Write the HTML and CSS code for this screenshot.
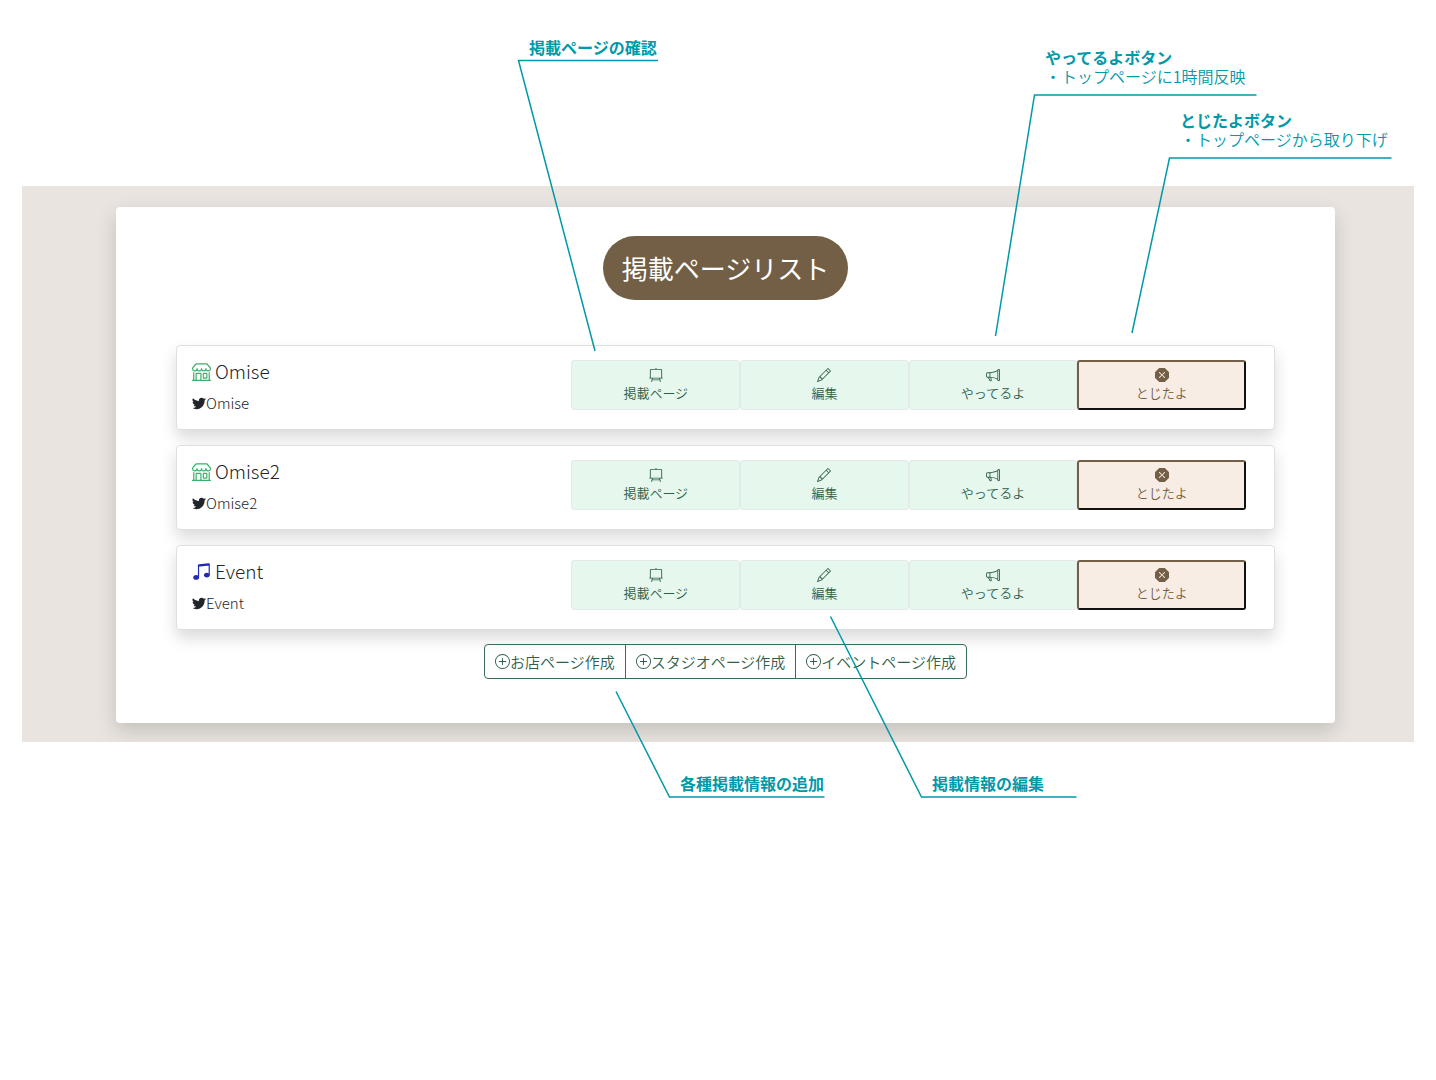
FILE: index.html
```html
<!DOCTYPE html>
<html lang="ja">
<head>
<meta charset="utf-8">
<meta name="viewport" content="width=device-width, initial-scale=1">
<title>掲載ページリスト</title>
<link rel="stylesheet" href="styles.css">
</head>
<body>
<svg class="sprite" aria-hidden="true">
  <symbol id="shop" viewBox="0 0 16 16"><path d="M2.97 1.35A1 1 0 0 1 3.73 1h8.54a1 1 0 0 1 .76.35l2.609 3.044A1.5 1.5 0 0 1 16 5.37v.255a2.375 2.375 0 0 1-4.25 1.458A2.37 2.37 0 0 1 9.875 8 2.37 2.37 0 0 1 8 7.083 2.37 2.37 0 0 1 6.125 8a2.37 2.37 0 0 1-1.875-.917A2.375 2.375 0 0 1 0 5.625V5.37a1.5 1.5 0 0 1 .361-.976zm1.78 4.275a1.375 1.375 0 0 0 2.75 0 .5.5 0 0 1 1 0 1.375 1.375 0 0 0 2.75 0 .5.5 0 0 1 1 0 1.375 1.375 0 1 0 2.75 0V5.37a.5.5 0 0 0-.12-.325L12.27 2H3.73L1.12 5.045A.5.5 0 0 0 1 5.37v.255a1.375 1.375 0 0 0 2.75 0 .5.5 0 0 1 1 0M1.5 8.5A.5.5 0 0 1 2 9v6h1v-5a1 1 0 0 1 1-1h3a1 1 0 0 1 1 1v5h6V9a.5.5 0 0 1 1 0v6h.5a.5.5 0 0 1 0 1H.5a.5.5 0 0 1 0-1H1V9a.5.5 0 0 1 .5-.5M4 15h3v-5H4zm5-5a1 1 0 0 1 1-1h2a1 1 0 0 1 1 1v3a1 1 0 0 1-1 1h-2a1 1 0 0 1-1-1zm3 0h-2v3h2z"/></symbol>
  <symbol id="music" viewBox="0 0 16 16"><path d="M6 13c0 1.105-1.12 2-2.5 2S1 14.105 1 13s1.12-2 2.5-2 2.5.896 2.5 2m9-2c0 1.105-1.12 2-2.5 2s-2.5-.895-2.5-2 1.12-2 2.5-2 2.5.895 2.5 2"/><path d="M14 11V2h1v9zM6 3v10H5V3z"/><path d="M5 2.905a1 1 0 0 1 .9-.995l8-.8a1 1 0 0 1 1.1.995V3L5 4z"/></symbol>
  <symbol id="twitter" viewBox="0 0 16 16"><path d="M5.026 15c6.038 0 9.341-5.003 9.341-9.334q.002-.211-.006-.422A6.7 6.7 0 0 0 16 3.542a6.7 6.7 0 0 1-1.889.518 3.3 3.3 0 0 0 1.447-1.817 6.5 6.5 0 0 1-2.087.793A3.286 3.286 0 0 0 7.875 6.03a9.32 9.32 0 0 1-6.767-3.429 3.29 3.29 0 0 0 1.018 4.382A3.3 3.3 0 0 1 .64 6.575v.045a3.29 3.29 0 0 0 2.632 3.218 3.2 3.2 0 0 1-.865.115 3 3 0 0 1-.614-.057 3.28 3.28 0 0 0 3.067 2.277A6.6 6.6 0 0 1 .78 13.58a6 6 0 0 1-.78-.045A9.34 9.34 0 0 0 5.026 15"/></symbol>
  <symbol id="easel" viewBox="0 0 16 16"><path d="M8 0a.5.5 0 0 1 .447.276L8.81 1h4.69A1.5 1.5 0 0 1 15 2.5V11h.5a.5.5 0 0 1 0 1h-2.86l.845 3.379a.5.5 0 0 1-.97.242L12.11 14H3.89l-.405 1.621a.5.5 0 0 1-.97-.242L3.36 12H.5a.5.5 0 0 1 0-1H1V2.5A1.5 1.5 0 0 1 2.5 1h4.691l.362-.724A.5.5 0 0 1 8 0M2 11h12V2.5a.5.5 0 0 0-.5-.5h-11a.5.5 0 0 0-.5.5zm9.61 1H4.39l-.25 1h7.72z"/></symbol>
  <symbol id="pencil" viewBox="0 0 16 16"><path d="M12.146.146a.5.5 0 0 1 .708 0l3 3a.5.5 0 0 1 0 .708l-10 10a.5.5 0 0 1-.168.11l-5 2a.5.5 0 0 1-.65-.65l2-5a.5.5 0 0 1 .11-.168zM11.207 2.5 13.5 4.793 14.793 3.5 12.5 1.207zm1.586 3L10.5 3.207 4 9.707V10h.5a.5.5 0 0 1 .5.5v.5h.5a.5.5 0 0 1 .5.5v.5h.293zm-9.761 5.175-.106.106-1.528 3.821 3.821-1.528.106-.106A.5.5 0 0 1 5 12.5V12h-.5a.5.5 0 0 1-.5-.5V11h-.5a.5.5 0 0 1-.468-.325"/></symbol>
  <symbol id="megaphone" viewBox="0 0 16 16"><path d="M13 2.5a1.5 1.5 0 0 1 3 0v11a1.5 1.5 0 0 1-3 0v-.214c-2.162-1.241-4.49-1.843-6.912-2.083l.405 2.712A1 1 0 0 1 5.51 15.1h-.548a1 1 0 0 1-.916-.599l-1.85-3.49-.202-.003A2.014 2.014 0 0 1 0 9V7a2.02 2.02 0 0 1 1.992-2.013 75 75 0 0 0 2.483-.075c3.043-.154 6.148-.849 8.525-2.199zm1 0v11a.5.5 0 0 0 1 0v-11a.5.5 0 0 0-1 0m-1 1.35c-2.344 1.205-5.209 1.842-8 2.033v4.233q.27.015.537.036c2.568.189 5.093.744 7.463 1.993zm-9 6.215v-4.13a95 95 0 0 1-1.992.052A1.02 1.02 0 0 0 1 7v2c0 .55.448 1.002 1.006 1.009A61 61 0 0 1 4 10.065m-.657.975 1.609 3.037.01.024h.548l-.002-.014-.443-2.966a68 68 0 0 0-1.722-.082z"/></symbol>
  <symbol id="close" viewBox="0 0 16 16"><path d="M11.46.146A.5.5 0 0 0 11.107 0H4.893a.5.5 0 0 0-.353.146L.146 4.54A.5.5 0 0 0 0 4.893v6.214a.5.5 0 0 0 .146.353l4.394 4.394a.5.5 0 0 0 .353.146h6.214a.5.5 0 0 0 .353-.146l4.394-4.394a.5.5 0 0 0 .146-.353V4.893a.5.5 0 0 0-.146-.353zm-6.106 4.5L8 7.293l2.646-2.647a.5.5 0 0 1 .708.708L8.707 8l2.647 2.646a.5.5 0 0 1-.708.708L8 8.707l-2.646 2.647a.5.5 0 0 1-.708-.708L7.293 8 4.646 5.354a.5.5 0 1 1 .708-.708"/></symbol>
  <symbol id="plus" viewBox="0 0 16 16"><path d="M8 15A7 7 0 1 1 8 1a7 7 0 0 1 0 14m0 1A8 8 0 1 0 8 0a8 8 0 0 0 0 16"/><path d="M8 4a.5.5 0 0 1 .5.5v3h3a.5.5 0 0 1 0 1h-3v3a.5.5 0 0 1-1 0v-3h-3a.5.5 0 0 1 0-1h3v-3A.5.5 0 0 1 8 4"/></symbol>
</svg>

<div class="guide">
  <main class="stage">
    <section class="panel">
      <h1 class="panel-title">掲載ページリスト</h1>

      <ul class="page-list">
        <li class="page-row">
          <div class="page-info">
            <h2 class="page-name"><svg class="icon icon-shop"><use href="#shop"/></svg>Omise</h2>
            <p class="page-account"><svg class="icon icon-twitter"><use href="#twitter"/></svg>Omise</p>
          </div>
          <div class="page-actions">
            <button class="action" type="button"><svg class="icon"><use href="#easel"/></svg>掲載ページ</button>
            <button class="action" type="button"><svg class="icon"><use href="#pencil"/></svg>編集</button>
            <button class="action" type="button"><svg class="icon"><use href="#megaphone"/></svg>やってるよ</button>
            <button class="action action-closed" type="button"><svg class="icon"><use href="#close"/></svg>とじたよ</button>
          </div>
        </li>
        <li class="page-row">
          <div class="page-info">
            <h2 class="page-name"><svg class="icon icon-shop"><use href="#shop"/></svg>Omise2</h2>
            <p class="page-account"><svg class="icon icon-twitter"><use href="#twitter"/></svg>Omise2</p>
          </div>
          <div class="page-actions">
            <button class="action" type="button"><svg class="icon"><use href="#easel"/></svg>掲載ページ</button>
            <button class="action" type="button"><svg class="icon"><use href="#pencil"/></svg>編集</button>
            <button class="action" type="button"><svg class="icon"><use href="#megaphone"/></svg>やってるよ</button>
            <button class="action action-closed" type="button"><svg class="icon"><use href="#close"/></svg>とじたよ</button>
          </div>
        </li>
        <li class="page-row">
          <div class="page-info">
            <h2 class="page-name"><svg class="icon icon-music"><use href="#music"/></svg>Event</h2>
            <p class="page-account"><svg class="icon icon-twitter"><use href="#twitter"/></svg>Event</p>
          </div>
          <div class="page-actions">
            <button class="action" type="button"><svg class="icon"><use href="#easel"/></svg>掲載ページ</button>
            <button class="action" type="button"><svg class="icon"><use href="#pencil"/></svg>編集</button>
            <button class="action" type="button"><svg class="icon"><use href="#megaphone"/></svg>やってるよ</button>
            <button class="action action-closed" type="button"><svg class="icon"><use href="#close"/></svg>とじたよ</button>
          </div>
        </li>
      </ul>

      <div class="create-group">
        <button class="create" type="button"><svg class="icon"><use href="#plus"/></svg>お店ページ作成</button>
        <button class="create" type="button"><svg class="icon"><use href="#plus"/></svg>スタジオページ作成</button>
        <button class="create" type="button"><svg class="icon"><use href="#plus"/></svg>イベントページ作成</button>
      </div>
    </section>
  </main>

  <!-- Callouts pointing at the controls -->
  <div class="callouts">
    <svg class="callout-lines" viewBox="0 0 1436 820" preserveAspectRatio="none" aria-hidden="true">
      <polyline points="658,60.5 518.5,60.5 595,351"/>
      <polyline points="1256.5,95 1034.5,95 995.5,336"/>
      <polyline points="1391.5,158 1169.5,158 1132,333"/>
      <polyline points="616,691.5 669.5,797 824.5,797"/>
      <polyline points="830.5,616.5 921.5,797 1076.5,797"/>
    </svg>
    <p class="callout callout-view"><strong>掲載ページの確認</strong></p>
    <p class="callout callout-open"><strong>やってるよボタン</strong><br>・トップページに1時間反映</p>
    <p class="callout callout-close"><strong>とじたよボタン</strong><br>・トップページから取り下げ</p>
    <p class="callout callout-add"><strong>各種掲載情報の追加</strong></p>
    <p class="callout callout-edit"><strong>掲載情報の編集</strong></p>
  </div>
</div>
</body>
</html>
```
FILE: styles.css
```css
* {
  box-sizing: border-box;
}

body {
  margin: 0;
  background: #fff;
  color: #212529;
  font-family: "Noto Sans CJK JP", "Noto Sans", sans-serif;
  font-weight: 350;
}

h1,
h2,
p,
ul {
  margin: 0;
  padding: 0;
}

button {
  font: inherit;
  cursor: pointer;
}

.sprite {
  display: none;
}

.icon {
  flex: none;
  width: 14px;
  height: 14px;
  fill: currentColor;
}

.guide {
  position: relative;
  padding: 186px 22px 78px;
}

.stage {
  padding: 21px 79px 19px 94px;
  background: #e9e4df;
  overflow: hidden;
}

.panel {
  display: flex;
  flex-direction: column;
  align-items: center;
  padding: 29px 60px 44px;
  border-radius: 4px;
  background: #fff;
  box-shadow: 0 8px 20px rgba(0, 0, 0, 0.16);
}

.panel-title {
  padding: 0 19px;
  border-radius: 32px;
  background: #725f45;
  color: #fff;
  font-size: 26px;
  font-weight: 400;
  line-height: 64px;
}

.page-list {
  display: flex;
  flex-direction: column;
  gap: 15px;
  width: 100%;
  margin-top: 45px;
  list-style: none;
}

.page-row {
  display: grid;
  grid-template-columns: 9fr 16fr;
  align-items: start;
  padding: 14px 28px 15px 15px;
  border: 1px solid #dfdfdf;
  border-radius: 4px;
  background: #fff;
  box-shadow: 0 8px 16px rgba(0, 0, 0, 0.15);
}

.page-info {
  display: flex;
  flex-direction: column;
  gap: 10px;
}

.page-name,
.page-account {
  display: flex;
  align-items: center;
  line-height: 22px;
  font-weight: 300;
}

.page-name {
  gap: 4px;
  font-size: 19px;
}

.page-account {
  font-size: 15px;
}

.page-name .icon {
  width: 19px;
  height: 19px;
}

.icon-shop {
  color: #3dae6b;
}

.icon-music {
  color: #2528b0;
}

.page-actions {
  display: grid;
  grid-template-columns: repeat(4, 1fr);
}

.action {
  display: flex;
  flex-direction: column;
  align-items: center;
  justify-content: center;
  gap: 2px;
  height: 50px;
  padding: 0;
  border: 1px solid #e4e9ea;
  border-radius: 3px;
  background: #e6f7ed;
  color: #2f5f4b;
  font-size: 13px;
  line-height: 18px;
}

.action-closed {
  border-width: 2px;
  border-color: #725f45 #111 #111 #725f45;
  background: #f8ede4;
  color: #725f45;
}

.create-group {
  display: flex;
  margin-top: 14px;
  border: 1px solid #3a6b55;
  border-radius: 4px;
}

.create {
  display: flex;
  align-items: center;
  height: 33px;
  padding: 0 10px;
  border: 0;
  background: transparent;
  color: #2f5f4b;
  font-size: 15px;
}

.create + .create {
  border-left: 1px solid #3a6b55;
}

.create .icon {
  width: 15px;
  height: 15px;
}

.callouts {
  position: absolute;
  inset: 0;
  pointer-events: none;
}

.callout-lines {
  display: block;
  width: 100%;
  height: 820px;
  fill: none;
  stroke: #0099a8;
  stroke-width: 1.5;
}

.callout-lines polyline {
  vector-effect: non-scaling-stroke;
}

.callout {
  position: absolute;
  color: #0099a8;
  font-size: 16px;
  line-height: 19px;
  white-space: nowrap;
}

.callout strong {
  font-weight: 700;
}

.callout-view {
  top: 38px;
  left: calc(100% * 529 / 1436);
}

.callout-open {
  top: 48px;
  left: calc(100% * 1045 / 1436);
}

.callout-close {
  top: 111px;
  left: calc(100% * 1180 / 1436);
}

.callout-add {
  top: 774px;
  left: calc(100% * 680 / 1436);
}

.callout-edit {
  top: 774px;
  left: calc(100% * 932 / 1436);
}
```
